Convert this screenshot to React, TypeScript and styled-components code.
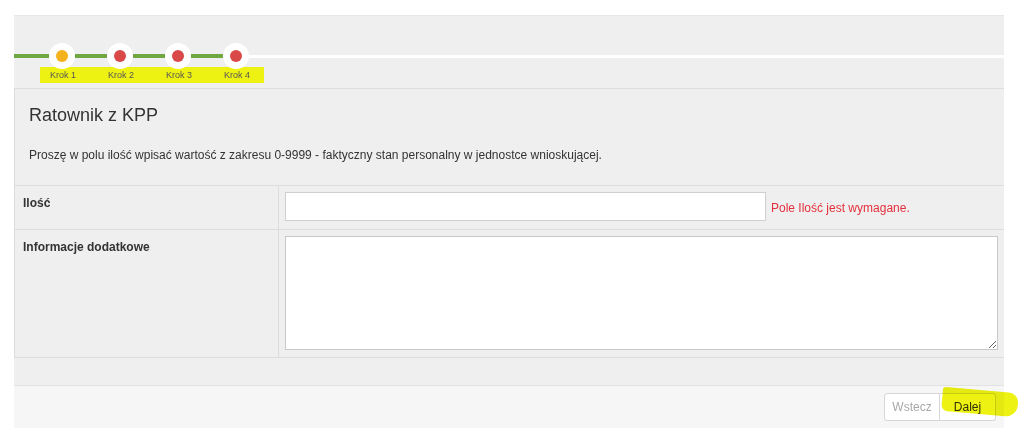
import React from 'react';
import styled, { createGlobalStyle } from 'styled-components';

const GlobalStyle = createGlobalStyle`
  body {
    margin: 0;
    background: #ffffff;
    font-family: "Liberation Sans", Arial, sans-serif;
    color: #333;
  }
`;

const steps = [
  { label: 'Krok 1', state: 'current' },
  { label: 'Krok 2', state: 'error' },
  { label: 'Krok 3', state: 'error' },
  { label: 'Krok 4', state: 'error' },
];

const Page = styled.div`
  width: 990px;
  margin: 15px 0 0 14px;
  background: #efefef;
  border-top: 1px solid #e6e6e6;
`;

const StepsBar = styled.div`
  padding: 27px 0 5px;
`;

const Track = styled.div`
  display: flex;
  align-items: center;
  height: 26px;
`;

const Segment = styled.div<{ $w?: number; $done?: boolean }>`
  height: ${p => (p.$done ? 4 : 3)}px;
  background: ${p => (p.$done ? '#6fa843' : '#ffffff')};
  ${p => (p.$w ? `width: ${p.$w}px;` : 'flex: 1;')}
`;

const Ring = styled.div`
  width: 26px;
  height: 26px;
  border-radius: 50%;
  background: #fff;
  display: flex;
  align-items: center;
  justify-content: center;
  flex-shrink: 0;
`;

const Dot = styled.div<{ $state: string }>`
  width: 12px;
  height: 12px;
  border-radius: 50%;
  background: ${p => (p.$state === 'current' ? '#f4b21d' : '#d9494a')};
`;

const LabelRow = styled.div`
  display: flex;
  width: 232px;
  height: 16px;
  margin: -2px 0 0 20px;
  background: linear-gradient(to right, transparent 6px, #eef212 6px, #eef212 230px, transparent 230px);
  border-radius: 2px;
`;

const StepLabel = styled.div`
  width: 58px;
  text-align: center;
  font-size: 9px;
  line-height: 16px;
  color: #555;
`;

const Panel = styled.div`
  border: 1px solid #dcdcdc;
  border-right: none;
  background: #efefef;
`;

const PanelHeading = styled.div`
  padding: 16px 14px 22px;
`;

const Title = styled.h3`
  margin: 0;
  font-size: 18px;
  font-weight: normal;
  line-height: 20px;
  color: #333;
`;

const Lead = styled.p`
  margin: 22px 0 0;
  font-size: 12px;
  line-height: 16px;
  color: #333;
`;

const Row = styled.div<{ $h: number }>`
  display: grid;
  grid-template-columns: 264px 1fr;
  box-sizing: border-box;
  height: ${p => p.$h}px;
  border-top: 1px solid #dcdcdc;
`;

const LabelCell = styled.div`
  padding: 10px 8px;
  font-size: 12px;
  font-weight: bold;
  line-height: 14px;
  color: #333;
  border-right: 1px solid #dcdcdc;
`;

const FieldCell = styled.div`
  padding: 6px;
  display: flex;
  align-items: flex-start;
`;

const TextInput = styled.input`
  width: 481px;
  height: 29px;
  box-sizing: border-box;
  border: 1px solid #cfcfcf;
  background: #fff;
  margin: 0;
  padding: 4px 6px;
  font: inherit;
`;

const ErrorText = styled.span`
  margin: 9px 0 0 5px;
  font-size: 12px;
  line-height: 14px;
  color: #e4303c;
`;

const TextArea = styled.textarea`
  width: 100%;
  height: 114px;
  box-sizing: border-box;
  border: 1px solid #c8c8c8;
  background: #fff;
  margin: 0;
  resize: vertical;
  font: inherit;
`;

const Gap = styled.div`
  height: 27px;
`;

const Footer = styled.div`
  display: flex;
  justify-content: flex-end;
  padding: 7px 8px 7px;
  background: #f6f6f6;
  border-top: 1px solid #e2e2e2;
`;

const ButtonGroup = styled.div`
  display: flex;
  position: relative;
`;

const Button = styled.button<{ $disabled?: boolean; $first?: boolean }>`
  width: 56px;
  height: 28px;
  padding: 0;
  background: #fff;
  border: 1px solid #d6d6d6;
  ${p => (p.$first ? 'border-radius: 3px 0 0 3px;' : 'border-radius: 0 3px 3px 0; border-left: none;')}
  font-family: "Liberation Sans", Arial, sans-serif;
  font-size: 12px;
  color: ${p => (p.$disabled ? '#a8a8a8' : '#333')};
  cursor: ${p => (p.$disabled ? 'default' : 'pointer')};
`;

const Marker = styled.div`
  position: absolute;
  left: 58px;
  top: -3px;
  width: 76px;
  height: 24px;
  background: #eef212;
  border-radius: 3px 10px 12px 6px;
  transform: rotate(5deg);
  mix-blend-mode: multiply;
  pointer-events: none;
`;

export default function App() {
  return (
    <>
      <GlobalStyle />
      <Page>
        <StepsBar>
          <Track>
            {steps.map((s, i) => (
              <React.Fragment key={s.label}>
                <Segment $done $w={i === 0 ? 35 : 32} />
                <Ring>
                  <Dot $state={s.state} />
                </Ring>
              </React.Fragment>
            ))}
            <Segment />
          </Track>
          <LabelRow>
            {steps.map(s => (
              <StepLabel key={s.label}>{s.label}</StepLabel>
            ))}
          </LabelRow>
        </StepsBar>

        <Panel>
          <PanelHeading>
            <Title>Ratownik z KPP</Title>
            <Lead>Proszę w polu ilość wpisać wartość z zakresu 0-9999 - faktyczny stan personalny w jednostce wnioskującej.</Lead>
          </PanelHeading>
          <Row $h={44}>
            <LabelCell>Ilość</LabelCell>
            <FieldCell>
              <TextInput type="text" />
              <ErrorText>Pole Ilość jest wymagane.</ErrorText>
            </FieldCell>
          </Row>
          <Row $h={128}>
            <LabelCell>Informacje dodatkowe</LabelCell>
            <FieldCell>
              <TextArea />
            </FieldCell>
          </Row>
        </Panel>

        <Gap />

        <Footer>
          <ButtonGroup>
            <Button $first $disabled>Wstecz</Button>
            <Button>Dalej</Button>
            <Marker />
          </ButtonGroup>
        </Footer>
      </Page>
    </>
  );
}
